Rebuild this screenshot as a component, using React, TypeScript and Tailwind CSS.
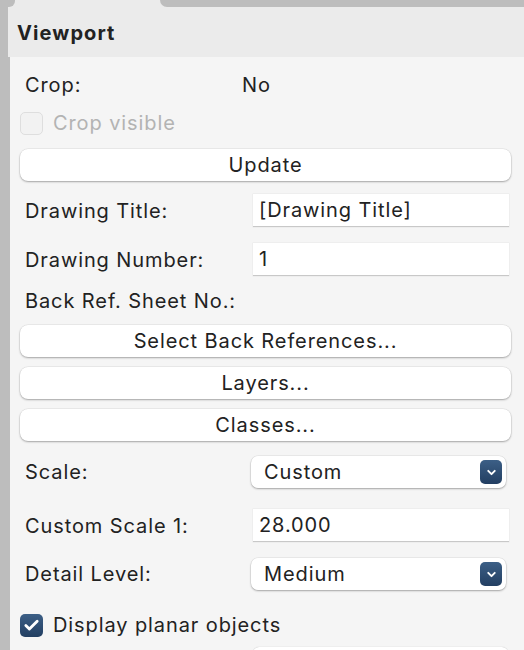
import { ChevronDown, Check } from 'lucide-react';

function Btn({ label }: { label: string }) {
  return (
    <button className="ml-[10px] mr-[13px] h-[32px] shrink-0 rounded-[8px] bg-white text-[20px] leading-none text-[#222] shadow-[0_1px_2px_rgba(0,0,0,0.3),0_0_0_0.5px_rgba(0,0,0,0.08)]">
      {label}
    </button>
  );
}

function Field({ label, value }: { label: string; value: string }) {
  return (
    <div className="flex h-[33px] shrink-0 items-center">
      <span className="w-[253px] pl-[25px]">{label}</span>
      <div className="flex h-[33px] w-[256px] items-center border-b border-b-[#c8c8c8] bg-white pl-[6px] shadow-[0_0_0_0.5px_rgba(0,0,0,0.06)]">
        {value}
      </div>
    </div>
  );
}

function Select({ label, value }: { label: string; value: string }) {
  return (
    <div className="flex h-[32px] shrink-0 items-center">
      <span className="w-[251px] pl-[25px]">{label}</span>
      <div className="flex h-[32px] w-[255px] items-center justify-between rounded-[7px] bg-white pl-[13px] pr-[4px] shadow-[0_1px_2px_rgba(0,0,0,0.3),0_0_0_0.5px_rgba(0,0,0,0.08)]">
        <span>{value}</span>
        <span className="flex h-[24px] w-[22px] items-center justify-center rounded-[5px] bg-gradient-to-b from-[#3c5f86] to-[#233f62]">
          <ChevronDown className="h-[13px] w-[13px] text-white" strokeWidth={3.5} />
        </span>
      </div>
    </div>
  );
}

export default function App() {
  return (
    <div
      className="relative h-[650px] w-[524px] overflow-hidden bg-[#bdbdbd] text-[20px] tracking-[0.9px] text-[#222]"
      style={{ fontFamily: 'Inter, "Liberation Sans", sans-serif' }}
    >
      {/* tab strip */}
      <div className="absolute left-0 top-0 z-10 h-[7px] w-[15px] rounded-br-[6px] bg-[#bdbdbd]" />
      <div className="ml-[8px] flex flex-col">
        <div className="flex shrink-0">
          <div className="h-[7px] w-[152px] bg-[#ebebeb]" />
          <div className="h-[7px] flex-1 bg-[#ebebeb]">
            <div className="h-[7px] w-full rounded-bl-[8px] bg-[#bdbdbd]" />
          </div>
        </div>
        <div className="flex h-[50px] shrink-0 items-center bg-[#ebebeb] pl-[9px] pt-[1px] text-[20px] font-bold tracking-[1.1px]">
          Viewport
        </div>
        <div className="ml-[2px] flex h-[600px] flex-col bg-[#f5f5f5]">
          <div className="mt-[14px] flex h-[28px] shrink-0 items-center">
            <span className="w-[232px] pl-[15px]">Crop:</span>
            <span>No</span>
          </div>
          <div className="mt-[12px] flex h-[24px] shrink-0 items-center pl-[10px]">
            <span className="h-[23px] w-[23px] rounded-[5px] border border-[#dedede] bg-[#f2f2f2]" />
            <span className="ml-[10px] text-[#b3b3b3]">Crop visible</span>
          </div>
          <div className="mt-[14px] flex shrink-0 flex-col">
            <Btn label="Update" />
          </div>
          <div className="mt-[13px] -ml-[10px] flex shrink-0 flex-col gap-[16px]">
            <Field label="Drawing Title:" value="[Drawing Title]" />
            <Field label="Drawing Number:" value="1" />
          </div>
          <div className="mt-[11px] flex h-[28px] shrink-0 items-center pl-[15px]">Back Ref. Sheet No.:</div>
          <div className="mt-[10px] flex shrink-0 flex-col gap-[10px]">
            <Btn label="Select Back References..." />
            <Btn label="Layers..." />
            <Btn label="Classes..." />
          </div>
          <div className="mt-[15px] -ml-[10px] flex shrink-0 flex-col">
            <Select label="Scale:" value="Custom" />
            <div className="mt-[21px]">
              <Field label="Custom Scale 1:" value="28.000" />
            </div>
            <div className="mt-[16px]">
              <Select label="Detail Level:" value="Medium" />
            </div>
          </div>
          <div className="mt-[23px] flex h-[24px] shrink-0 items-center pl-[10px]">
            <span className="flex h-[23px] w-[23px] items-center justify-center rounded-[5px] bg-gradient-to-b from-[#3c5f86] to-[#233f62]">
              <Check className="h-[17px] w-[17px] text-white" strokeWidth={4} />
            </span>
            <span className="ml-[10px]">Display planar objects</span>
          </div>
          <div className="ml-[243px] mt-[10px] h-[6px] w-[255px] shrink-0 rounded-t-[7px] bg-white shadow-[0_0_1px_rgba(0,0,0,0.3)]" />
        </div>
      </div>
    </div>
  );
}
